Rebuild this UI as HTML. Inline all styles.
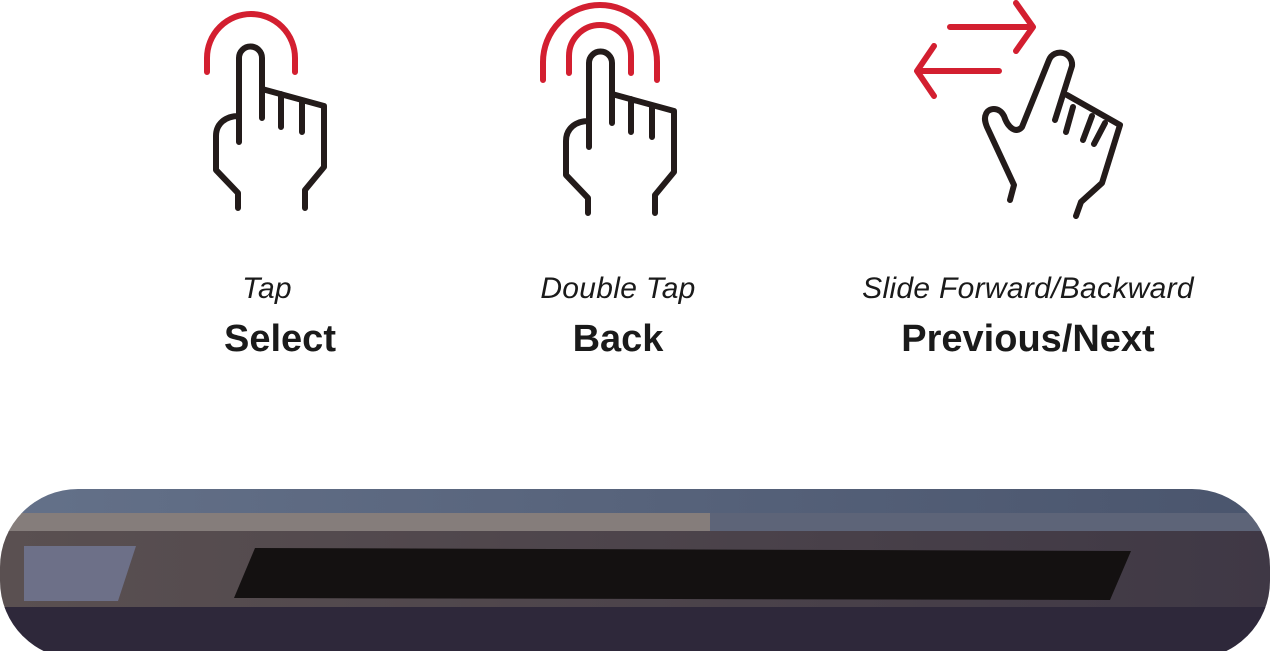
<!DOCTYPE html>
<html><head><meta charset="utf-8"><style>
html,body{margin:0;padding:0;background:#fff;width:1270px;height:651px;overflow:hidden;position:relative;font-family:"Liberation Sans",sans-serif}
.t{position:absolute;transform:translateX(-50%);white-space:nowrap;color:#1a1a1a}
.i{font-style:italic;font-size:30px;top:272px;letter-spacing:0.3px}
.b{font-weight:bold;font-size:38px;top:318px}
</style></head><body>
<svg width="1270" height="651" style="position:absolute;left:0;top:0">
<g fill="none" stroke-linecap="round" stroke-linejoin="round" stroke-width="6">
<path d="M207,72 V58 A44,44 0 0 1 295,58 V72" stroke="#d31f30"/>
<path d="M239,142 V58 A11.5,11.5 0 0 1 262,58 V118 M262,89 L324,106 V167 L305,190 V208 M281,94 V127 M302,100 V132 M239,116 C225,116 216,124 216,136 V170 L238,193 V208" stroke="#231b1a"/>
<g transform="translate(350,5)">
<path d="M239,142 V58 A11.5,11.5 0 0 1 262,58 V118 M262,89 L324,106 V167 L305,190 V208 M281,94 V127 M302,100 V132 M239,116 C225,116 216,124 216,136 V170 L238,193 V208" stroke="#231b1a"/>
</g>
<path d="M543,80 V62 A57,57 0 0 1 657,62 V80" stroke="#d31f30"/>
<path d="M569,73 V56 A31,31 0 0 1 631,56 V73" stroke="#d31f30"/>
<path d="M950,27 H1032 M1016,3 L1033,27 L1016,51 M999,71 H917 M934,46 L917,71 L934,96" stroke="#d31f30"/>
<path d="M1022,127 L1049,60 A12,12 0 0 1 1072,66 L1055,120 M1067,95 L1120,125 L1102,183 L1081,202 L1076,216 M1073,107 L1066,132 M1092,116 L1083,140 M1105,123 L1094,144 M1022,127 C1016,134 1008,128 1004,116 C999,106 988,108 986,114 C984,118 985,122 987,127 L1014,185 L1010,200" stroke="#231b1a"/>
</g>
<defs>
<clipPath id="c"><rect x="0" y="489" width="1270" height="170" rx="78" ry="78"/></clipPath>
<linearGradient id="g1" x1="0" x2="1"><stop offset="0" stop-color="#647189"/><stop offset="1" stop-color="#4a556d"/></linearGradient>
<linearGradient id="g3" x1="0" x2="1"><stop offset="0" stop-color="#5a5051"/><stop offset="1" stop-color="#3f3845"/></linearGradient>
</defs>
<g clip-path="url(#c)">
<rect x="0" y="489" width="1270" height="25" fill="url(#g1)"/>
<rect x="0" y="513" width="710" height="19" fill="#857d7b"/>
<rect x="710" y="513" width="560" height="19" fill="#5d6478"/>
<rect x="0" y="531" width="1270" height="78" fill="url(#g3)"/>
<rect x="0" y="607" width="1270" height="50" fill="#2e283a"/>
</g>
<polygon points="24,546 136,546 118,601 24,601" fill="#6d7088"/>
<polygon points="255,548 1131,551 1110,600 234,598" fill="#141111"/>
</svg>
<div class="t i" style="left:267px">Tap</div>
<div class="t b" style="left:280px">Select</div>
<div class="t i" style="left:618px">Double Tap</div>
<div class="t b" style="left:618px">Back</div>
<div class="t i" style="left:1028px">Slide Forward/Backward</div>
<div class="t b" style="left:1028px">Previous/Next</div>
</body></html>
